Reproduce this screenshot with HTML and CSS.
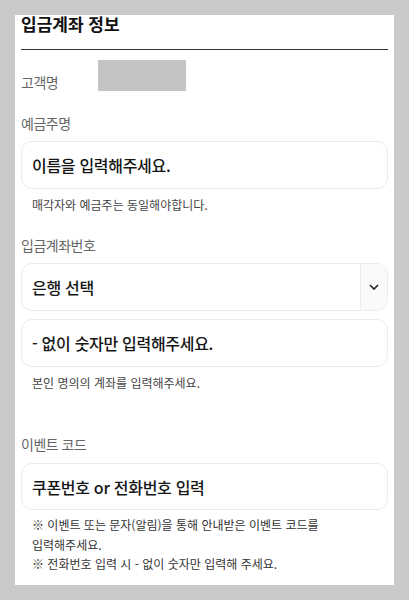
FILE: index.html
```html
<!DOCTYPE html>
<html lang="ko">
<head>
<meta charset="utf-8">
<link rel="stylesheet" href="styles.css">
</head>
<body>
<div class="card">
  <h2 class="title">입금계좌 정보</h2>
  <div class="name-row">
    <span class="label">고객명</span>
    <span class="name-box"></span>
  </div>
  <div class="label gap-22">예금주명</div>
  <div class="field mt-8">이름을 입력해주세요.</div>
  <p class="help">매각자와 예금주는 동일해야합니다.</p>
  <div class="label gap-20">입금계좌번호</div>
  <div class="select mt-8">
    <span class="select-text">은행 선택</span>
    <span class="select-arrow">
      <svg width="10" height="6" viewBox="0 0 10 6"><path d="M1 1l4 4 4-4" fill="none" stroke="#222" stroke-width="1.6"/></svg>
    </span>
  </div>
  <div class="field mt-8">- 없이 숫자만 입력해주세요.</div>
  <p class="help">본인 명의의 계좌를 입력해주세요.</p>
  <div class="label gap-41">이벤트 코드</div>
  <div class="field mt-9 field-46">쿠폰번호 or 전화번호 입력</div>
  <div class="notes">
    <p>※ 이벤트 또는 문자(알림)을 통해 안내받은 이벤트 코드를 입력해주세요.</p>
    <p>※ 전화번호 입력 시 - 없이 숫자만 입력해 주세요.</p>
  </div>
</div>
</body>
</html>
```
FILE: styles.css
```css
html, body {
  margin: 0;
  padding: 0;
}
body {
  background: #cacaca;
  padding: 15px;
  font-family: "Noto Sans CJK KR", "Noto Sans", sans-serif;
  height: 600px;
  box-sizing: border-box;
}
.card {
  background: #fff;
  height: 570px;
  padding: 0 6px;
  box-sizing: border-box;
}
.title {
  margin: 0;
  font-size: 17px;
  font-weight: 700;
  letter-spacing: 0;
  color: #111;
  line-height: 18px;
  height: 35px;
  box-sizing: border-box;
  border-bottom: 1.5px solid #333;
}
.name-row {
  display: flex;
  align-items: flex-end;
  margin-top: 10px;
}
.label {
  font-size: 14px;
  letter-spacing: -0.5px;
  color: #666;
  line-height: 20px;
}
.name-row .label {
  line-height: 18px;
  width: 77px;
}
.name-box {
  width: 88px;
  height: 31px;
  background: #c4c4c4;
}
.gap-22 { margin-top: 22px; }
.gap-20 { margin-top: 20px; }
.gap-41 { margin-top: 41px; }
.mt-8 { margin-top: 8px; }
.mt-9 { margin-top: 9px; }
.field {
  height: 48px;
  box-sizing: border-box;
  border: 1px solid #ececec;
  border-radius: 11px;
  padding: 0 10px;
  display: flex;
  align-items: center;
  font-size: 16px;
  font-weight: 500;
  letter-spacing: -0.3px;
  color: #151515;
}
.field-46 { height: 47px; }
.select {
  height: 48px;
  box-sizing: border-box;
  border: 1px solid #ececec;
  border-radius: 11px;
  display: flex;
  overflow: hidden;
}
.select-text {
  flex: 1;
  display: flex;
  align-items: center;
  padding: 0 10px;
  font-size: 16px;
  font-weight: 500;
  letter-spacing: -0.3px;
  color: #151515;
}
.select-arrow {
  width: 26px;
  border-left: 1px solid #ececec;
  background: #fafafa;
  display: flex;
  align-items: center;
  justify-content: center;
}
.help {
  margin: 6px 0 0 0;
  padding-left: 11px;
  font-size: 12px;
  letter-spacing: 0;
  line-height: 20px;
  color: #444;
}
.notes {
  margin-top: 5px;
  padding: 0 11px;
}
.notes p {
  margin: 0;
  font-size: 12px;
  letter-spacing: 0;
  line-height: 19.5px;
  color: #333;
  word-break: keep-all;
}
```
